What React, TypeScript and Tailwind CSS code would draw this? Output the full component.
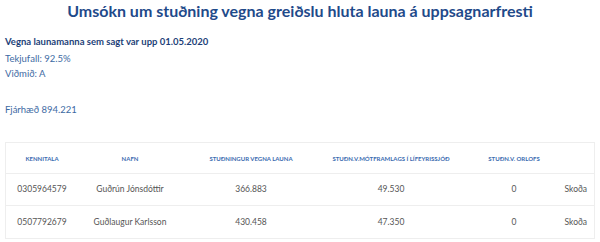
import React from 'react'

const rows = [
  { kt: '0305964579', name: 'Guðrún Jónsdóttir', laun: '366.883', lif: '49.530', orlof: '0' },
  { kt: '0507792679', name: 'Guðlaugur Karlsson', laun: '430.458', lif: '47.350', orlof: '0' },
]

const cols = 'grid grid-cols-[72px_104px_138px_142px_104px_28px]'

export default function App() {
  return (
    <div className="h-[242px] w-[600px] overflow-hidden bg-white font-['Lato',sans-serif]">
      <h1 className="pt-[1px] text-center text-[16px] font-bold leading-[20px] text-[#1f4a8a]">
        Umsókn um stuðning vegna greiðslu hluta launa á uppsagnarfresti
      </h1>

      <div className="px-[5px] pt-[14px]">
        <p className="text-[9.5px] font-bold leading-[14px] text-[#1d3f78]">
          Vegna launamanna sem sagt var upp 01.05.2020
        </p>
        <p className="mt-[3px] text-[9.5px] leading-[14px] text-[#3d6aa3]">Tekjufall: 92.5%</p>
        <p className="mt-[1px] text-[9.5px] leading-[14px] text-[#3d6aa3]">Viðmið: A</p>
        <p className="mt-[22px] text-[9.5px] leading-[14px] text-[#3d6aa3]">Fjárhæð 894.221</p>
      </div>

      <div className="mx-[5px] mt-[25px] border border-[#eeeeee]">
        <div className={`${cols} h-[31px] items-center border-b border-[#eeeeee] text-center text-[6px] font-bold uppercase text-[#3b6bb0]`}>
          <div>Kennitala</div>
          <div>Nafn</div>
          <div>Stuðningur vegna launa</div>
          <div>Stuðn.v.mótframlags í lífeyrissjóð</div>
          <div>Stuðn.v. orlofs</div>
          <div />
        </div>
        {rows.map((r, i) => (
          <div
            key={r.kt}
            className={`${cols} h-[32px] items-center text-center text-[8.5px] text-[#555555] ${i === 0 ? 'border-b border-[#eeeeee]' : ''}`}
          >
            <div>{r.kt}</div>
            <div>{r.name}</div>
            <div>{r.laun}</div>
            <div>{r.lif}</div>
            <div>{r.orlof}</div>
            <div className="flex justify-end pr-[7px]">
              <span className="whitespace-nowrap">Skoða</span>
            </div>
          </div>
        ))}
      </div>
    </div>
  )
}
